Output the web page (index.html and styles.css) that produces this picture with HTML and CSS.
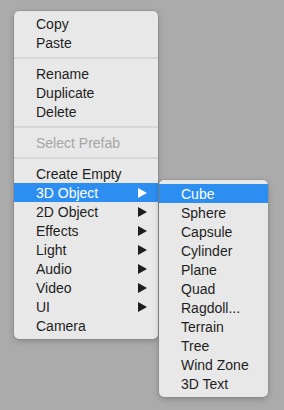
FILE: index.html
```
<!DOCTYPE html>
<html lang="en">
<head>
  <meta charset="UTF-8" />
  <title>Context Menu</title>
  <link rel="stylesheet" href="styles.css">
</head>
<body>
  <div class="menus">
    <ul class="menu main-menu">
      <li class="item">Copy</li>
      <li class="item">Paste</li>
      <li class="sep"></li>
      <li class="item">Rename</li>
      <li class="item">Duplicate</li>
      <li class="item">Delete</li>
      <li class="sep"></li>
      <li class="item disabled">Select Prefab</li>
      <li class="sep"></li>
      <li class="item">Create Empty</li>
      <li class="item has-sub active">3D Object
        <svg class="arrow" width="9" height="10" viewBox="0 0 9 10"><polygon points="0,0 9,5 0,10" /></svg>
      </li>
      <li class="item has-sub">2D Object
        <svg class="arrow" width="9" height="10" viewBox="0 0 9 10"><polygon points="0,0 9,5 0,10" /></svg>
      </li>
      <li class="item has-sub">Effects
        <svg class="arrow" width="9" height="10" viewBox="0 0 9 10"><polygon points="0,0 9,5 0,10" /></svg>
      </li>
      <li class="item has-sub">Light
        <svg class="arrow" width="9" height="10" viewBox="0 0 9 10"><polygon points="0,0 9,5 0,10" /></svg>
      </li>
      <li class="item has-sub">Audio
        <svg class="arrow" width="9" height="10" viewBox="0 0 9 10"><polygon points="0,0 9,5 0,10" /></svg>
      </li>
      <li class="item has-sub">Video
        <svg class="arrow" width="9" height="10" viewBox="0 0 9 10"><polygon points="0,0 9,5 0,10" /></svg>
      </li>
      <li class="item has-sub">UI
        <svg class="arrow" width="9" height="10" viewBox="0 0 9 10"><polygon points="0,0 9,5 0,10" /></svg>
      </li>
      <li class="item">Camera</li>
    </ul>

    <ul class="menu sub-menu">
      <li class="item active">Cube</li>
      <li class="item">Sphere</li>
      <li class="item">Capsule</li>
      <li class="item">Cylinder</li>
      <li class="item">Plane</li>
      <li class="item">Quad</li>
      <li class="item">Ragdoll...</li>
      <li class="item">Terrain</li>
      <li class="item">Tree</li>
      <li class="item">Wind Zone</li>
      <li class="item">3D Text</li>
    </ul>
  </div>
</body>
</html>
```

FILE: styles.css
```
html, body {
  margin: 0;
  height: 100%;
}
body {
  background-color: #ababab;
  font-family: 'Liberation Sans', Arial, sans-serif;
  font-size: 14px;
  color: #1e1e1e;
}
.menus {
  display: flex;
  align-items: flex-start;
  gap: 1px;
  padding: 11px 0 0 14px;
}
.menu {
  list-style: none;
  margin: 0;
  background-color: #e8e8e8;
  border-radius: 5px;
  box-shadow: 0 0 0 0.5px rgba(0, 0, 0, 0.12), 0 2px 6px rgba(0, 0, 0, 0.22);
}
.main-menu {
  width: 144px;
  padding: 3px 0 4px;
}
.sub-menu {
  width: 109px;
  padding: 4px 0;
  margin-top: 169px;
}
.item {
  box-sizing: border-box;
  display: flex;
  align-items: center;
  justify-content: space-between;
  height: 19px;
  line-height: 18px;
  padding: 1px 11px 0 22px;
  white-space: nowrap;
}
.item.disabled {
  color: #a6a6a6;
}
.item.active {
  background-color: #2d8ef2;
  color: #fff;
}
.arrow {
  fill: #1e1e1e;
}
.item.active .arrow {
  fill: #fff;
}
.sep {
  height: 2px;
  margin: 5px 0;
  background-color: #d6d6d6;
}
```
